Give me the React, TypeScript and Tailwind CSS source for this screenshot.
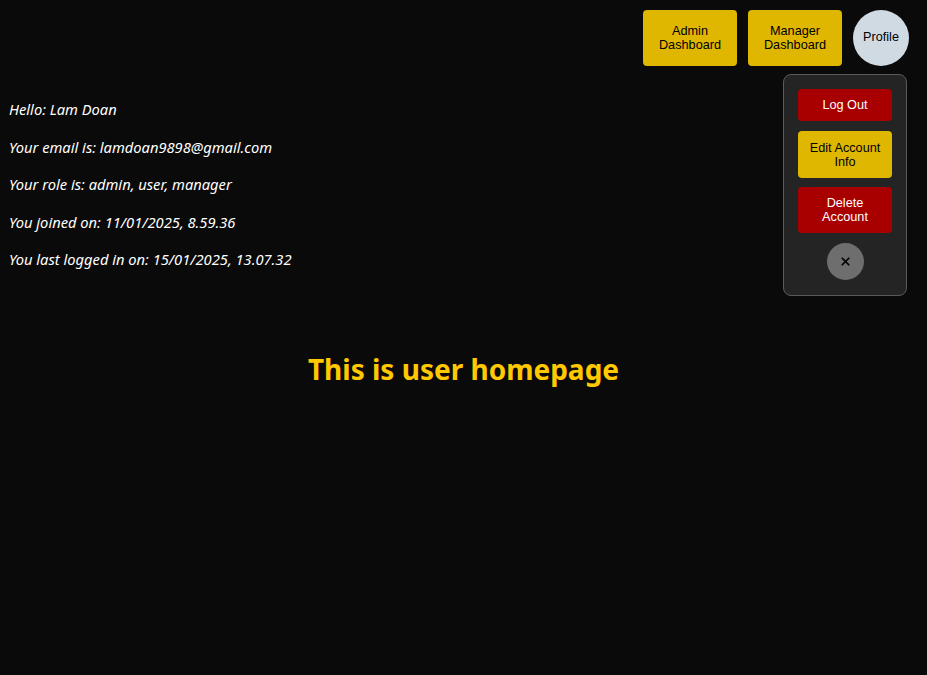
import { X } from 'lucide-react';

const infoLines = [
  'Hello: Lam Doan',
  'Your email is: lamdoan9898@gmail.com',
  'Your role is: admin, user, manager',
  'You joined on: 11/01/2025, 8.59.36',
  'You last logged in on: 15/01/2025, 13.07.32',
];

function ProfileMenu() {
  return (
    <div className="absolute right-[20px] top-[74px] flex w-[124px] flex-col items-center gap-[10px] rounded-lg border border-[#5a5a5a] bg-[#242424] px-[14px] pt-[14px] pb-[15px]">
      <button className="h-[32px] w-[94px] rounded-[4px] bg-[#a80000] text-[12.7px] leading-[14px] text-white">
        Log Out
      </button>
      <button className="h-[47px] w-[94px] rounded-[4px] bg-[#dfb700] px-2 text-[12.7px] leading-[14px] text-black">
        Edit Account Info
      </button>
      <button className="-mt-[1px] h-[46px] w-[94px] rounded-[4px] bg-[#a80000] px-2 text-[12.7px] leading-[14px] text-white">
        Delete Account
      </button>
      <button className="flex h-[37px] w-[37px] items-center justify-center rounded-full bg-[#6e6e6e] text-black">
        <X size={13} strokeWidth={3.2} />
      </button>
    </div>
  );
}

export default function App() {
  return (
    <div className="relative min-h-[675px] bg-[#0a0a0a] font-['Liberation_Sans',Arial,sans-serif] text-white">
      <header className="flex items-start justify-end gap-[11px] pt-[10px] pr-[18px]">
        <button className="h-[56px] w-[94px] rounded-[4px] bg-[#dfb700] text-[12.7px] leading-[14px] text-black">
          Admin
          <br />
          Dashboard
        </button>
        <button className="h-[56px] w-[94px] rounded-[4px] bg-[#dfb700] text-[12.7px] leading-[14px] text-black">
          Manager
          <br />
          Dashboard
        </button>
        <button className="h-[56px] w-[56px] rounded-full bg-[#d0dae3] text-[12.7px] text-black">
          Profile
        </button>
      </header>

      <section className="mt-[33px] flex flex-col gap-[16px] pl-[9px] font-['Noto_Sans',sans-serif] text-[14.7px] italic leading-[21.5px]">
        {infoLines.map((line) => (
          <p key={line}>{line}</p>
        ))}
      </section>

      <h1 className="mt-[77px] text-center font-['Noto_Sans',sans-serif] text-[28px] font-bold leading-[42px] text-[#ffc800]">
        This is user homepage
      </h1>

      <ProfileMenu />
    </div>
  );
}
